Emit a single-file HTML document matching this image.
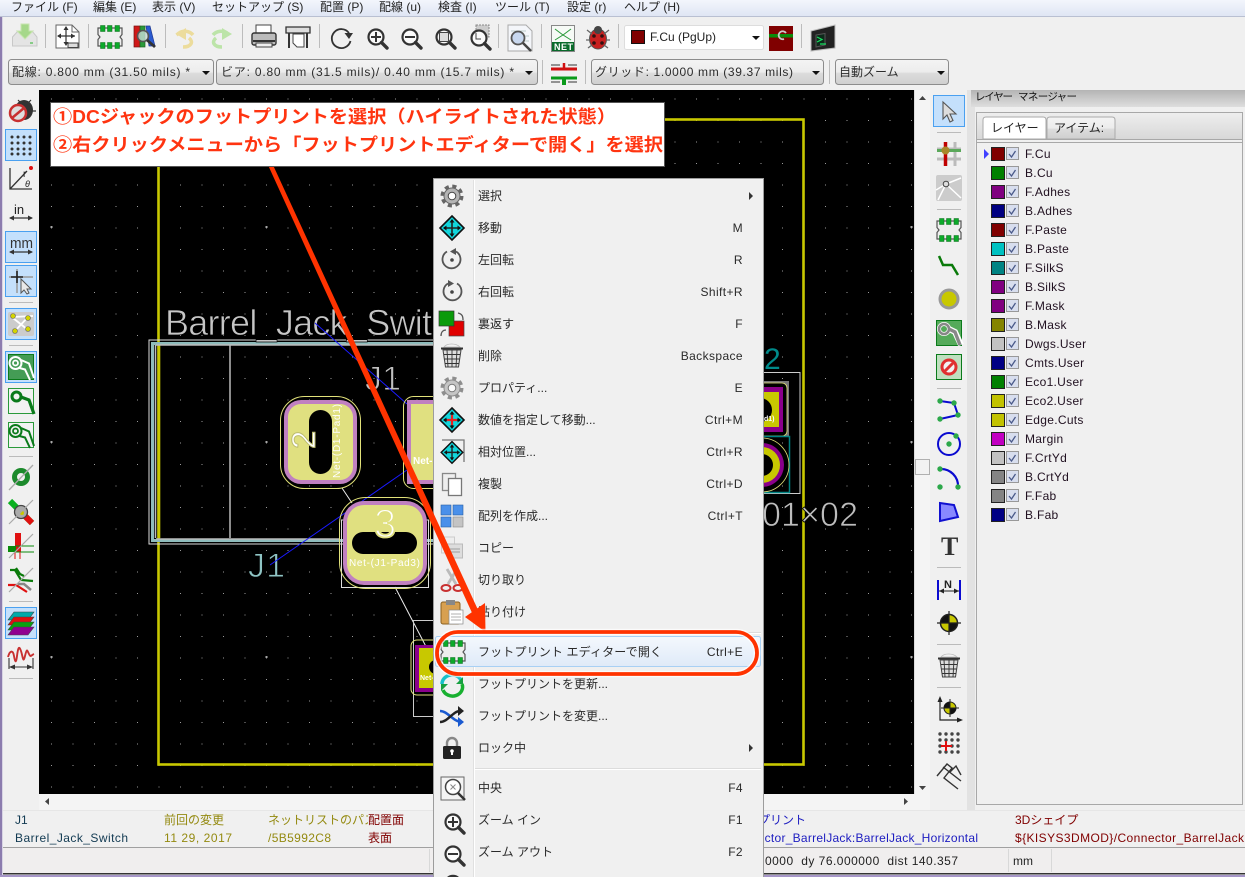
<!DOCTYPE html>
<html lang="ja"><head><meta charset="utf-8"><title>KiCad Pcbnew</title>
<style>
html,body{margin:0;padding:0;background:#f0f0f0;width:1245px;height:877px;overflow:hidden}
svg{position:absolute;left:0;top:0;display:block}
text{font-family:"Liberation Sans","Noto Sans CJK JP",sans-serif;font-size:12px;fill:#222;white-space:pre}
.m text{font-size:12px;fill:#2a2a2a}
.m .s{text-anchor:end;letter-spacing:.4px}
.l text{letter-spacing:.3px;fill:#201020}
.a text{font-size:18px;font-weight:bold;fill:#ff3410}
.c text{font-size:12px;fill:#2c2c2c}
</style></head><body>
<svg width="1245" height="877" viewBox="0 0 1245 877" xmlns="http://www.w3.org/2000/svg">
<defs>
<linearGradient id="mb" x1="0" y1="0" x2="0" y2="1"><stop offset="0" stop-color="#f3f6fc"/><stop offset="1" stop-color="#dfe6f4"/></linearGradient>
<linearGradient id="cb" x1="0" y1="0" x2="0" y2="1"><stop offset="0" stop-color="#f4f4f4"/><stop offset=".5" stop-color="#ececec"/><stop offset=".55" stop-color="#dcdcdc"/><stop offset="1" stop-color="#cfcfcf"/></linearGradient>
<linearGradient id="hd" x1="0" y1="0" x2="0" y2="1"><stop offset="0" stop-color="#b4b4b4"/><stop offset="1" stop-color="#dedede"/></linearGradient>
<linearGradient id="hi" x1="0" y1="0" x2="0" y2="1"><stop offset="0" stop-color="#f4f8fd"/><stop offset="1" stop-color="#dfeaf8"/></linearGradient>
<linearGradient id="tb" x1="0" y1="0" x2="0" y2="1"><stop offset="0" stop-color="#eee"/><stop offset="1" stop-color="#d8d8d8"/></linearGradient>
<pattern id="dots" x="51" y="98.5" width="21.5" height="21.5" patternUnits="userSpaceOnUse"><rect width="1" height="1" fill="#9a9a9a"/></pattern>
<pattern id="bigdots" x="50.500" y="226" width="215" height="215" patternUnits="userSpaceOnUse"><rect width="2" height="2" fill="#aaa"/></pattern>
<g id="fp"><path d="M1 4H25V10.5L23 13 25 15.5V22H1V15.5L3 13 1 10.5Z" fill="#eee" stroke="#555" stroke-width="1.2"/><g fill="#0caa2a" stroke="#0a6a1a" stroke-width=".5"><rect x="3.500" y="1.500" width="4.500" height="6"/><rect x="10.500" y="1.500" width="4.500" height="6"/><rect x="18" y="1.500" width="4.500" height="6"/><rect x="3.500" y="18.500" width="4.500" height="6"/><rect x="10.500" y="18.500" width="4.500" height="6"/><rect x="18" y="18.500" width="4.500" height="6"/></g></g>
<g id="mag"><circle cx="10" cy="10" r="7.500" fill="#fafafa" stroke="#333" stroke-width="2.200"/><path d="M15.500 15.500L21 21" stroke="#333" stroke-width="3.400" stroke-linecap="round"/></g>
<g id="gear"><circle cx="12" cy="12" r="9.500" fill="none" stroke="#666" stroke-width="4" stroke-dasharray="4 3.460"/><circle cx="12" cy="12" r="8" fill="#b4b4b4" stroke="#666"/><circle cx="12" cy="12" r="3.800" fill="#fff" stroke="#444"/></g>
<g id="mv"><path d="M12 0L24 12 12 24 0 12Z" fill="#12d6dc" stroke="#111" stroke-width="1.600"/><path d="M12 4V20M4 12H20" stroke="#222" stroke-width="1.600"/><path d="M12 3L9.500 6.500H14.500ZM12 21L9.500 17.500H14.500ZM3 12L6.500 9.500V14.500ZM21 12L17.500 9.500V14.500Z" fill="#111"/></g>
<g id="trash"><path d="M5 4C8 0 17 0 21 4Z" fill="#f4f4f4" stroke="#bbb" stroke-width=".8"/><path d="M2 5.500H24" stroke="#333" stroke-width="2"/><path d="M4 7L6.500 24H19.500L22 7Z" fill="#ddd" stroke="#444"/><path d="M8 7L9 24M13 7V24M18 7L17 24M5 11.500H21M5.500 16H20.500M6 20.500H20" stroke="#333" stroke-width=".9"/></g>
<g id="tr" fill="none"><circle cx="7.500" cy="7.500" r="4.500" stroke-width="3"/><path d="M12 8L20 11 25 25" stroke-width="3.200"/></g>
<g id="tz" fill="none"><circle cx="7.500" cy="8" r="6" stroke-width="2"/><circle cx="7.500" cy="8" r="2.500" stroke-width="1.800"/><path d="M13 5L21 8.500 26 23M11.500 13L17 14.500 22 25" stroke-width="2"/></g>
</defs>

<!-- chrome -->
<rect width="1245" height="877" fill="#f0f0f0"/>
<rect width="1245" height="16" fill="url(#mb)"/><rect y="16" width="1245" height="1" fill="#b9c0d2"/>
<rect x="0" y="17" width="2" height="860" fill="#8c7cae"/><rect x="2" y="17" width="1" height="860" fill="#d8d4e4"/>
<text x="11" y="11">ファイル (F)</text><text x="93" y="11">編集 (E)</text><text x="152" y="11">表示 (V)</text><text x="212" y="11">セットアップ (S)</text><text x="320" y="11">配置 (P)</text><text x="379" y="11">配線 (u)</text><text x="438" y="11">検査 (I)</text><text x="495" y="11">ツール (T)</text><text x="567" y="11">設定 (r)</text><text x="624" y="11">ヘルプ (H)</text>

<!-- canvas -->
<rect x="39" y="90" width="875" height="704" fill="#000"/>
<rect x="39" y="90" width="875" height="704" fill="url(#dots)"/>
<rect x="39" y="90" width="875" height="704" fill="url(#bigdots)"/>
<rect x="158.500" y="119.500" width="645" height="645" fill="none" stroke="#c8c800" stroke-width="2.600"/>
<rect x="149" y="340" width="330" height="204" fill="none" stroke="#ddd" stroke-width="1"/>
<rect x="152.500" y="343.500" width="330" height="197" fill="none" stroke="#8fbcbc" stroke-width="3"/>
<path d="M159 345V538" stroke="#c8c800" stroke-width="2.600"/>
<path d="M155.500 345V538" stroke="#bbb" stroke-width="1.500"/>
<path d="M230 345V538M156 345H440M156 539H340" stroke="#bbb" stroke-width="1.500"/>
<text x="165" y="335" textLength="267" lengthAdjust="spacing" style="font-size:36px;fill:#c6c6c6;stroke:#000;stroke-width:.7px">Barrel_Jack_Swit</text>
<text x="365" y="390" textLength="36" style="font-size:34px;fill:#c0c0c0;stroke:#000;stroke-width:.9px">J1</text>
<text x="248" y="577" textLength="37" style="font-size:34px;fill:#8fc4c4;stroke:#000;stroke-width:.9px">J1</text>
<!-- ratsnest -->
<path d="M315 323L407 404M407 470L270 565" stroke="#1a1aff" stroke-width="1" fill="none"/>
<path d="M342 488L352 503M395 587L433 660" stroke="#eee" stroke-width="1" fill="none"/>
<!-- pad 2 -->
<rect x="280.500" y="396.500" width="80" height="92" rx="24" fill="none" stroke="#e2e27a"/>
<rect x="284" y="400" width="73" height="84" rx="17" fill="#c080c0"/>
<rect x="288" y="404" width="65" height="76" rx="13" fill="#e0e080"/>
<rect x="309" y="410" width="23" height="64" rx="11.500" fill="#000"/>
<text transform="translate(315,449) rotate(-90)" style="font-size:33px;fill:#fff;stroke:#bdbd70;stroke-width:1px">2</text>
<text transform="translate(340,478) rotate(-90)" textLength="74" style="font-size:10px;fill:#fff">Net-(D1-Pad1)</text>
<!-- pad 1 -->
<rect x="403.500" y="396.500" width="60" height="92" rx="10" fill="none" stroke="#e2e27a"/>
<rect x="407" y="400" width="50" height="84" fill="#c080c0"/>
<rect x="411" y="404" width="40" height="76" fill="#e0e080"/>
<text x="413" y="464" style="font-size:10px;fill:#fff;font-weight:bold">Net-</text>
<!-- pad 3 -->
<rect x="341.500" y="520" width="87" height="67.500" fill="none" stroke="#ddd"/>
<rect x="339.500" y="497.500" width="91" height="91" rx="26" fill="none" stroke="#e2e27a"/>
<rect x="343" y="501" width="84" height="84" rx="21" fill="#c080c0"/>
<rect x="347" y="505" width="76" height="76" rx="17" fill="#e0e080"/>
<rect x="352" y="532" width="65" height="22" rx="11" fill="#000"/>
<text x="374" y="537" style="font-size:40px;fill:#fff;stroke:#e0e080;stroke-width:1.800px">3</text>
<text x="349" y="566" textLength="71" style="font-size:10px;fill:#fff">Net-(J1-Pad3)</text>
<!-- bottom fp -->
<rect x="413.500" y="620.500" width="40" height="96" fill="none" stroke="#ccc"/>
<rect x="411" y="640" width="30" height="55" rx="6" fill="none" stroke="#e2e27a"/>
<rect x="415" y="645" width="30" height="47" fill="#8a008a"/>
<rect x="419" y="648" width="30" height="40" fill="#c8c800"/>
<circle cx="436" cy="667" r="7" fill="#000"/>
<text x="420" y="680" style="font-size:7px;fill:#fff;font-weight:bold">Net-</text>
<!-- right pads -->
<rect x="740" y="372.500" width="60" height="121" fill="none" stroke="#ccc"/>
<rect x="750" y="381" width="39" height="56" fill="#777"/>
<rect x="750" y="383" width="37" height="53" rx="5" fill="#000" stroke="#e2e27a" stroke-width=".8"/>
<rect x="750" y="387" width="33" height="45" fill="#8a008a"/>
<rect x="750" y="392" width="29" height="35" fill="#c8c800"/>
<circle cx="760" cy="410" r="12" fill="#000"/>
<text x="764" y="421" style="font-size:7px;fill:#fff;font-weight:bold">d1)</text>
<rect x="740" y="436.500" width="49.500" height="56" fill="none" stroke="#008484" stroke-width="1.500"/>
<circle cx="762" cy="465" r="27" fill="none" stroke="#e2e27a" stroke-width=".8"/>
<circle cx="762" cy="465" r="22" fill="#8a008a"/>
<circle cx="762" cy="465" r="18" fill="#c8c800"/>
<circle cx="762" cy="465" r="11" fill="#000"/>
<text x="764" y="369" style="font-size:30px;fill:#008a8a">2</text>
<text x="762" y="526" textLength="96" lengthAdjust="spacing" style="font-size:34px;fill:#bdbdbd;stroke:#000;stroke-width:.8px">01×02</text>

<!-- top toolbar -->
<g fill="none">
<path d="M12.500 37L18 31H32L37 37V46H12.500Z" fill="#e4e4e4" stroke="#c8c8c8"/><path d="M21 24H29V31H33L25 39 17 31H21Z" fill="#a6d88a" stroke="#c8e4b0"/><rect x="30" y="42" width="3" height="2" fill="#8c8"/>
<path d="M45.500 24V48M88.500 24V48M165.500 24V48M242.500 24V48M319.500 24V48M498.500 24V48M541.500 24V48M618.500 24V48M801.500 24V48" stroke="#bcbcbc"/>
<path d="M56 25H72L79 32V48H56Z" fill="#fff" stroke="#666"/><path d="M72 25V32H79" stroke="#666"/><path d="M66 27V44M58 36H75" stroke="#333" stroke-width="1.200"/><path d="M66 26L63.500 30H68.500ZM66 46L63.500 42H68.500ZM57 36L61 33.500V38.500ZM75 36L71 33.500V38.500Z" fill="#333"/><rect x="68" y="43" width="10" height="4.500" fill="#ddd" stroke="#444"/>
<use href="#fp" x="97" y="24"/>
<rect x="134" y="26" width="6" height="21" fill="#d01818" stroke="#701010" stroke-width=".7"/><rect x="140" y="26" width="5" height="21" fill="#2a9a3a" stroke="#206020" stroke-width=".7"/><path d="M146 26H150L155 46H149Z" fill="#2a5ad0" stroke="#203a90" stroke-width=".7"/><circle cx="143" cy="36" r="5.500" fill="#c8dcd8" fill-opacity=".8" stroke="#555" stroke-width="1.600"/><path d="M147 40L155 47" stroke="#333" stroke-width="2.800"/>
<path d="M193 35A10 9 0 0 0 179 33M179 33L176.500 35M183 47C191 47 194 42 189 38" stroke="#ecdc9c" stroke-width="3.500"/><path d="M176 34L186 28V40Z" fill="#ecdc9c" stroke="none"/>
<path d="M213 35A10 9 0 0 1 227 33M222 47C214 47 211 42 216 38" stroke="#bce4a8" stroke-width="3.500"/><path d="M232 34L222 28V40Z" fill="#bce4a8" stroke="none"/>
<rect x="256" y="25" width="15" height="8" fill="#fff" stroke="#444"/><rect x="252" y="33" width="24" height="12" rx="2" fill="#bbb" stroke="#333" stroke-width="1.400"/><rect x="253" y="40" width="22" height="2" fill="#333"/><rect x="256" y="43" width="16" height="4" fill="#eee" stroke="#444"/>
<path d="M286 27H310V33H286Z" fill="#ddd" stroke="#333" stroke-width="1.300"/><path d="M289 33V48M307 33V48" stroke="#333" stroke-width="2"/><path d="M293 34H304V47H297L293 43Z" fill="#fff" stroke="#444"/>
<path d="M349 33A9.500 9.500 0 1 0 350.500 41" stroke="#333" stroke-width="1.800"/><path d="M344.500 33H353L349 39Z" fill="#333"/>
<use href="#mag" x="366" y="27"/><path d="M371 37H381M376 32V42" stroke="#333" stroke-width="2"/>
<use href="#mag" x="400" y="27"/><path d="M405 37H415" stroke="#333" stroke-width="2"/>
<use href="#mag" x="434" y="27"/><rect x="439.500" y="32.500" width="9" height="9" fill="#ddd" stroke="#444"/>
<rect x="476" y="25" width="13" height="12" fill="#ccc" stroke="#888" stroke-dasharray="2 1"/><use href="#mag" x="469" y="28"/><path d="M476 33V39H481" stroke="#444"/>
<path d="M508 25H526L532 31V51H508Z" fill="#f4f6fa" stroke="#aaa"/><path d="M511 31H526M511 36H529M511 41H529" stroke="#bcc"/><circle cx="518" cy="38" r="6.500" fill="#c8d8f0" stroke="#555" stroke-width="1.800"/><path d="M523 43L531 51" stroke="#444" stroke-width="2.500"/>
<rect x="551.500" y="25.500" width="23" height="26" fill="#f6faf6" stroke="#888"/><path d="M555 29L563 35 571 29M555 40L563 35 571 40" stroke="#2a9a3a" stroke-width="1"/><rect x="552" y="42" width="22" height="9" fill="#086a2a"/>
<ellipse cx="598" cy="39" rx="8.500" ry="10" fill="#c82020" stroke="#555"/><circle cx="598" cy="30" r="4" fill="#444"/><path d="M587 30L592 34M609 30L604 34M586 40H590M610 40H606M588 48L592 45M608 48L604 45" stroke="#666" stroke-width="1.300"/><g fill="#301010"><circle cx="594" cy="36" r="1.800"/><circle cx="602" cy="36" r="1.800"/><circle cx="594" cy="43" r="1.800"/><circle cx="602" cy="43" r="1.800"/></g>
<rect x="769" y="26" width="24" height="25" fill="#800000"/><rect x="769" y="34" width="24" height="3.500" fill="#0a8a0a"/><path d="M786 33A4 4 0 1 0 784 39" stroke="#ccc" stroke-width="1.800"/>
<path d="M811 31L835 25V48L811 51Z" fill="#222" stroke="#bbb"/><path d="M816 35L825 33.500V45L816 47Z" fill="#0e2a1a" stroke="#555"/><path d="M817 37L822 39.500 817 42M820 44H826" stroke="#18e060" stroke-width="1.200"/>
</g>
<text x="554" y="50" textLength="19" style="font-size:9px;font-weight:bold;fill:#fff">NET</text>
<g>
<rect x="624.500" y="25.500" width="139" height="24" rx="2" fill="#fff" stroke="#ddd"/><rect x="631.500" y="30.500" width="13" height="13" fill="#800000" stroke="#111"/><text x="650" y="41">F.Cu (PgUp)</text><path d="M752 36H760L756 40Z" fill="#111"/>
</g>
<!-- combos -->
<g class="c">
<rect x="8.500" y="59.500" width="205" height="25" rx="3" fill="url(#cb)" stroke="#8c8c8c"/><text x="12" y="76" textLength="178">配線: 0.800 mm (31.50 mils) *</text><path d="M202 71H210L206 75Z" fill="#111"/>
<rect x="216.500" y="59.500" width="321" height="25" rx="3" fill="url(#cb)" stroke="#8c8c8c"/><text x="221" y="76" textLength="293">ビア: 0.80 mm (31.5 mils)/ 0.40 mm (15.7 mils) *</text><path d="M525 71H533L529 75Z" fill="#111"/>
<rect x="591.500" y="59.500" width="232" height="25" rx="3" fill="url(#cb)" stroke="#8c8c8c"/><text x="595" y="76" textLength="198">グリッド: 1.0000 mm (39.37 mils)</text><path d="M812 71H820L816 75Z" fill="#111"/>
<rect x="835.500" y="59.500" width="113" height="25" rx="3" fill="url(#cb)" stroke="#8c8c8c"/><text x="839" y="76">自動ズーム</text><path d="M937 71H945L941 75Z" fill="#111"/>
</g>
<path d="M542.500 60V84M585.500 60V84M829.500 60V84" stroke="#bcbcbc"/>
<g fill="none"><path d="M551 69H577" stroke="#d01010" stroke-width="3"/><path d="M551 78H577" stroke="#0a9a1a" stroke-width="3"/><path d="M564 63V69L560 69" stroke="#d01010" stroke-width="2.500"/><path d="M564 78V85" stroke="#0a9a1a" stroke-width="4"/><path d="M551 65H560M568 65H577M551 82H560M568 82H577" stroke="#333"/></g>

<!-- left toolbar -->
<g fill="none">
<ellipse cx="24" cy="110" rx="9" ry="10" fill="#333"/><path d="M18 100L22 104M31 100L27 104M13 111H36" stroke="#333" stroke-width="1.200"/><circle cx="18" cy="113" r="8" fill="#ddd" stroke="#c83030" stroke-width="2.500"/><path d="M12 118L24 108" stroke="#c83030" stroke-width="2.500"/>
<rect x="5.500" y="129.500" width="31" height="31" fill="#c4e0fc" stroke="#4aa0f0"/>
<g fill="#333"><circle cx="12" cy="137" r="1.500"/><circle cx="18" cy="137" r="1.500"/><circle cx="24" cy="137" r="1.500"/><circle cx="30" cy="137" r="1.500"/><circle cx="12" cy="143" r="1.500"/><circle cx="18" cy="143" r="1.500"/><circle cx="24" cy="143" r="1.500"/><circle cx="30" cy="143" r="1.500"/><circle cx="12" cy="149" r="1.500"/><circle cx="18" cy="149" r="1.500"/><circle cx="24" cy="149" r="1.500"/><circle cx="30" cy="149" r="1.500"/><circle cx="12" cy="154" r="1.500"/><circle cx="18" cy="154" r="1.500"/><circle cx="24" cy="154" r="1.500"/><circle cx="30" cy="154" r="1.500"/></g>
<path d="M10 168V189H32M10 189L27 171" stroke="#333" stroke-width="1.300"/><circle cx="31" cy="168" r="2" fill="#e01010"/>
<path d="M10 218H32" stroke="#333" stroke-width="1.200"/><path d="M9 218L14 215.500V220.500ZM33 218L28 215.500V220.500Z" fill="#333"/>
<rect x="5.500" y="231.500" width="31" height="31" fill="#c4e0fc" stroke="#4aa0f0"/>
<path d="M10 252H32" stroke="#333" stroke-width="1.200"/><path d="M9 252L14 249.500V254.500ZM33 252L28 249.500V254.500Z" fill="#333"/>
<rect x="5.500" y="265.500" width="31" height="31" fill="#c4e0fc" stroke="#4aa0f0"/>
<path d="M9 277H33M17 269V293" stroke="#999" stroke-width="1.500"/><path d="M11 277H23M17 271V283" stroke="#222" stroke-width="1.600"/><path d="M21 279V293L24 290 27 294 29 293 27 289H31Z" fill="#e8e8e8" stroke="#555"/>
<path d="M9 302.500H33M9 345.500H33M9 456.500H33M9 601.500H33M9 678.500H33" stroke="#bbb"/>
<rect x="5.500" y="308.500" width="31" height="31" fill="#c4e0fc" stroke="#4aa0f0"/><rect x="8" y="312" width="26" height="24" rx="2" fill="#ccc"/><path d="M13 317L33 316M15 331L28 317M13 318L28 330" stroke="#fff" stroke-width="1.800"/><g fill="#d4d400" stroke="#666" stroke-width=".6"><circle cx="13" cy="316" r="2.500"/><circle cx="28" cy="318" r="2.500"/><circle cx="15" cy="331" r="2.500"/><circle cx="28" cy="329" r="2.500"/></g>
<rect x="5.500" y="351.500" width="31" height="31" fill="#c4e0fc" stroke="#4aa0f0"/><rect x="8.500" y="354.500" width="25" height="25" fill="#449c55" stroke="#0a7a1a"/><use href="#tz" x="8" y="355" stroke="#fff"/>
<rect x="8.500" y="388.500" width="25" height="25" fill="#f2f2f2" stroke="#2a9a3a"/><use href="#tr" x="9" y="389" stroke="#0a7a1a"/>
<rect x="8.500" y="422.500" width="25" height="25" fill="#f2f2f2" stroke="#2a9a3a"/><use href="#tz" x="8" y="423" stroke="#0a7a1a"/>
<circle cx="21" cy="477" r="9" fill="#1c8a2c"/><circle cx="21" cy="477" r="4.500" fill="#f0f0f0" stroke="#1c8a2c"/><path d="M9 490L33 465" stroke="#aaa" stroke-width="1.300"/>
<path d="M10 501L32 523" stroke="#0ab020" stroke-width="6" /><path d="M23 514L32 523" stroke="#e01010" stroke-width="6"/><circle cx="21" cy="512" r="6.500" fill="#aaa" stroke="#444" stroke-width="1.300"/><circle cx="22" cy="513" r="2" fill="#c8c800"/><path d="M9 524L33 500" stroke="#aaa" stroke-width="1.200"/>
<rect x="15" y="533" width="6" height="19" fill="#e01010"/><rect x="8" y="546" width="8" height="6" fill="#0a8a0a"/><path d="M15 546H34M15 552H34" stroke="#0a8a0a"/><path d="M15 552V559M20 552V559" stroke="#e01010"/><path d="M9 558L33 534" stroke="#aaa" stroke-width="1.200"/>
<path d="M10 570L15 570 21 580 33 581M16 568L20 574 24 576" stroke="#0a7a0a" stroke-width="2.200"/><path d="M8 585H16L27 592" stroke="#e01010" stroke-width="2.200" /><path d="M18 584H24L31 590" stroke="#888" stroke-width="2.500"/><path d="M9 592L33 568" stroke="#aaa" stroke-width="1.200"/>
<rect x="5.500" y="607.500" width="31" height="31" fill="#c4e0fc" stroke="#4aa0f0"/>
<path d="M14 612H34L28 620H8Z" fill="#0aa" stroke="#444" stroke-width=".6"/><path d="M14 617H34L28 625H8Z" fill="#e01010" stroke="#444" stroke-width=".6"/><path d="M14 622H34L28 630H8Z" fill="#0aa010" stroke="#444" stroke-width=".6"/><path d="M14 627H34L28 635H8Z" fill="#900090" stroke="#444" stroke-width=".6"/>
<path d="M8 657C10 650 13 650 14 656S16 664 17 656 19 645 21 651 23 664 25 656 27 650 29 654 31 655 34 654" stroke="#c83030" stroke-width="1.900"/><path d="M9 658V669M33 658V669M10 667H32" stroke="#333" stroke-width="1.100"/><path d="M9 667L15 664.500V669.500ZM33 667L27 664.500V669.500Z" fill="#333"/>
</g>
<text x="14" y="214" style="font-size:13px">in</text>
<text x="10" y="248" textLength="23" lengthAdjust="spacingAndGlyphs" style="font-size:15px;fill:#333">mm</text>
<text x="23" y="177" style="font-size:10px">r</text><text x="25" y="187" style="font-size:9px;font-style:italic">θ</text>

<!-- right scrollbar + toolbar -->
<rect x="914" y="90" width="16" height="720" fill="#f4f4f4"/><rect x="914" y="90" width="1" height="704" fill="#ddd"/>
<path d="M919 100H926L922.500 96Z" fill="#444"/><path d="M919 786H926L922.500 790Z" fill="#444"/>
<rect x="915.500" y="459.500" width="14" height="15" fill="#f2f2f2" stroke="#b0b0b0"/>
<rect x="39" y="794" width="875" height="16" fill="#f4f4f4"/><path d="M49 798V805L45 801.500Z" fill="#444"/><path d="M904 798V805L908 801.500Z" fill="#444"/>
<rect x="967" y="90" width="8" height="720" fill="#e2e2e2"/>
<g fill="none">
<rect x="933.500" y="95.500" width="31" height="31" fill="#c4e0fc" stroke="#4aa0f0"/><path d="M943 102V119L947 115 950 122 953 120.500 950 114H956Z" fill="#ddd" stroke="#555" stroke-width="1.100"/>
<path d="M937 132.500H961M937 209.500H961M937 388.500H961M937 567.500H961M937 644.500H961M937 687.500H961" stroke="#bbb"/>
<path d="M937 149H961M937 159H961M955 142V166" stroke="#bbb" stroke-width="3"/><path d="M937 150.500H961" stroke="#5aa85a" stroke-width="3"/><path d="M945.500 142V166" stroke="#c00000" stroke-width="3.500"/><circle cx="945.500" cy="150.500" r="4" fill="#a8882a"/>
<rect x="936" y="175" width="26" height="26" rx="2" fill="#ccc"/><path d="M946 184L936 190M946 184L961 178M946 184L938 200M946 184L961 198" stroke="#fff" stroke-width="1.500"/><circle cx="946" cy="184" r="2.800" fill="#ddd" stroke="#444"/>
<use href="#fp" x="936" y="217"/>
<path d="M939 256L943 265H952L958 275" stroke="#0a7a0a" stroke-width="2.500"/>
<circle cx="949" cy="299" r="9" fill="#c8c800" stroke="#999" stroke-width="3"/>
<rect x="936.500" y="320.500" width="25" height="25" fill="#55aa5a" stroke="#0a7a1a"/>
<circle cx="944" cy="329" r="5" stroke="#fff" stroke-width="4"/><path d="M949 329L955 332 961 345" stroke="#fff" stroke-width="6"/><circle cx="944" cy="329" r="5" stroke="#888" stroke-width="2.600"/><path d="M949 329L955 332 960 345" stroke="#888" stroke-width="3.400"/>
<rect x="936.500" y="354.500" width="25" height="25" fill="#bfe0bf" stroke="#0a7a1a"/><circle cx="949" cy="367" r="7" fill="#f2f2f2" stroke="#e03030" stroke-width="3"/><path d="M945 371L953 363" stroke="#e03030" stroke-width="3"/>
<path d="M940 401L954 403 958 415 940 419" stroke="#0a0ad0" stroke-width="2"/><g fill="#2ca84a"><circle cx="940" cy="401" r="2.700"/><circle cx="954" cy="403" r="2.700"/><circle cx="958" cy="415" r="2.700"/><circle cx="940" cy="419" r="2.700"/></g>
<circle cx="949" cy="444" r="11" stroke="#0a0ad0" stroke-width="2"/><circle cx="949" cy="444" r="2.700" fill="#2ca84a"/><circle cx="956" cy="436" r="2.700" fill="#2ca84a"/>
<path d="M940 469A17 17 0 0 1 958 487" stroke="#0a0ad0" stroke-width="2.200"/><circle cx="940" cy="487" r="2.700" fill="#2ca84a"/><circle cx="958" cy="487" r="2.700" fill="#2ca84a"/><circle cx="940" cy="469" r="2.700" fill="#2ca84a"/>
<path d="M940 503L954 505 958 517 940 521Z" fill="#8888ff" stroke="#1010d0" stroke-width="2"/>
<path d="M938 580V600M960 580V600" stroke="#0a0ad0" stroke-width="2"/><path d="M939 591H959" stroke="#222"/><path d="M939 591L944 588.500V593.500ZM959 591L954 588.500V593.500Z" fill="#222"/>
<circle cx="949" cy="623" r="8.500" fill="#c8c800" stroke="#222" stroke-width="1.500"/><path d="M949 623H941A8 8 0 0 1 949 615ZM949 623H957A8 8 0 0 1 949 631Z" fill="#111"/><path d="M937 623H961M949 611V635" stroke="#222" stroke-width="1.200"/>
<use href="#trash" x="936" y="653"/>
<path d="M940 698V720H961" stroke="#222" stroke-width="1.200"/><path d="M940 696L937.500 702H942.500ZM963 720L957 717.500V722.500Z" fill="#222"/><circle cx="950" cy="708" r="6" fill="#c8c800" stroke="#222"/><path d="M950 708H944A6 6 0 0 1 950 702ZM950 708H956A6 6 0 0 1 950 714Z" fill="#111"/><path d="M941 708H959M950 699V717" stroke="#222"/>
<g fill="#444"><circle cx="940" cy="734" r="1.700"/><circle cx="946" cy="734" r="1.700"/><circle cx="952" cy="734" r="1.700"/><circle cx="958" cy="734" r="1.700"/><circle cx="940" cy="740" r="1.700"/><circle cx="946" cy="740" r="1.700"/><circle cx="952" cy="740" r="1.700"/><circle cx="958" cy="740" r="1.700"/><circle cx="940" cy="746" r="1.700"/><circle cx="952" cy="746" r="1.700"/><circle cx="958" cy="746" r="1.700"/><circle cx="940" cy="752" r="1.700"/><circle cx="946" cy="752" r="1.700"/><circle cx="952" cy="752" r="1.700"/><circle cx="958" cy="752" r="1.700"/></g><path d="M941 746H952M946 741V751" stroke="#e01010" stroke-width="2"/>
<path d="M937 776L947 764 952 768 944 778 958 789M943 767L961 781M950 772L956 766 961 775" stroke="#333" stroke-width="1.400"/>
</g>
<text x="941" y="555" style="font-size:26px;font-weight:bold;font-family:'Liberation Serif',serif;fill:#333">T</text>
<text x="944" y="588" style="font-size:11px;font-weight:bold">N</text>

<!-- layer manager -->
<rect x="971" y="90" width="274" height="17" fill="url(#hd)"/>
<text x="975" y="100" textLength="38" style="font-size:10.500px;fill:#111">レイヤー</text><text x="1018" y="100" textLength="59" style="font-size:10.500px;fill:#111">マネージャー</text>
<rect x="976.500" y="112.500" width="266" height="692" fill="#f0f0f0" stroke="#a8a8a8"/>
<rect x="977" y="113" width="265" height="26" fill="url(#tb)"/>
<path d="M983 139V120Q983 117 986 117H1043Q1046 117 1046 120V139Z" fill="#fff" stroke="#aaa"/>
<path d="M1047 139V120Q1047 117 1050 117H1112Q1115 117 1115 120V139Z" fill="url(#cb)" stroke="#aaa"/>
<path d="M977 139.500H1242M977 142.500H1242" stroke="#a8a8a8"/>
<text x="991" y="132">レイヤー</text><text x="1054" y="132">アイテム:</text>
<path d="M984 149V159L989 154Z" fill="#4040ff"/>
<g class="l">
<g stroke="#222"><rect x="991.500" y="147.500" width="13" height="13" fill="#800000"/><rect x="991.500" y="166.500" width="13" height="13" fill="#008000"/><rect x="991.500" y="185.500" width="13" height="13" fill="#800080"/><rect x="991.500" y="204.500" width="13" height="13" fill="#000080"/><rect x="991.500" y="223.500" width="13" height="13" fill="#800000"/><rect x="991.500" y="242.500" width="13" height="13" fill="#00c2c2"/><rect x="991.500" y="261.500" width="13" height="13" fill="#008484"/><rect x="991.500" y="280.500" width="13" height="13" fill="#800080"/><rect x="991.500" y="299.500" width="13" height="13" fill="#800080"/><rect x="991.500" y="318.500" width="13" height="13" fill="#848400"/><rect x="991.500" y="337.500" width="13" height="13" fill="#c2c2c2"/><rect x="991.500" y="356.500" width="13" height="13" fill="#000084"/><rect x="991.500" y="375.500" width="13" height="13" fill="#008000"/><rect x="991.500" y="394.500" width="13" height="13" fill="#c2c200"/><rect x="991.500" y="413.500" width="13" height="13" fill="#c2c200"/><rect x="991.500" y="432.500" width="13" height="13" fill="#c200c2"/><rect x="991.500" y="451.500" width="13" height="13" fill="#c2c2c2"/><rect x="991.500" y="470.500" width="13" height="13" fill="#848484"/><rect x="991.500" y="489.500" width="13" height="13" fill="#848484"/><rect x="991.500" y="508.500" width="13" height="13" fill="#000084"/></g>
<g fill="#d8deee" stroke="#999"><rect x="1006.500" y="147.500" width="12" height="12"/><rect x="1006.500" y="166.500" width="12" height="12"/><rect x="1006.500" y="185.500" width="12" height="12"/><rect x="1006.500" y="204.500" width="12" height="12"/><rect x="1006.500" y="223.500" width="12" height="12"/><rect x="1006.500" y="242.500" width="12" height="12"/><rect x="1006.500" y="261.500" width="12" height="12"/><rect x="1006.500" y="280.500" width="12" height="12"/><rect x="1006.500" y="299.500" width="12" height="12"/><rect x="1006.500" y="318.500" width="12" height="12"/><rect x="1006.500" y="337.500" width="12" height="12"/><rect x="1006.500" y="356.500" width="12" height="12"/><rect x="1006.500" y="375.500" width="12" height="12"/><rect x="1006.500" y="394.500" width="12" height="12"/><rect x="1006.500" y="413.500" width="12" height="12"/><rect x="1006.500" y="432.500" width="12" height="12"/><rect x="1006.500" y="451.500" width="12" height="12"/><rect x="1006.500" y="470.500" width="12" height="12"/><rect x="1006.500" y="489.500" width="12" height="12"/><rect x="1006.500" y="508.500" width="12" height="12"/></g>
<path d="M1009 154l2.500 3 4-6m-6.500 22l2.500 3 4-6m-6.500 22l2.500 3 4-6m-6.500 22l2.500 3 4-6m-6.500 22l2.500 3 4-6m-6.500 22l2.500 3 4-6m-6.500 22l2.500 3 4-6m-6.500 22l2.500 3 4-6m-6.500 22l2.500 3 4-6m-6.500 22l2.500 3 4-6m-6.500 22l2.500 3 4-6m-6.500 22l2.500 3 4-6m-6.500 22l2.500 3 4-6m-6.500 22l2.500 3 4-6m-6.500 22l2.500 3 4-6m-6.500 22l2.500 3 4-6m-6.500 22l2.500 3 4-6m-6.500 22l2.500 3 4-6m-6.500 22l2.500 3 4-6m-6.500 22l2.500 3 4-6" fill="none" stroke="#4a5a8a" stroke-width="1.300"/>
<text x="1025" y="158">F.Cu</text><text x="1025" y="177">B.Cu</text><text x="1025" y="196">F.Adhes</text><text x="1025" y="215">B.Adhes</text><text x="1025" y="234">F.Paste</text><text x="1025" y="253">B.Paste</text><text x="1025" y="272">F.SilkS</text><text x="1025" y="291">B.SilkS</text><text x="1025" y="310">F.Mask</text><text x="1025" y="329">B.Mask</text><text x="1025" y="348">Dwgs.User</text><text x="1025" y="367">Cmts.User</text><text x="1025" y="386">Eco1.User</text><text x="1025" y="405">Eco2.User</text><text x="1025" y="424">Edge.Cuts</text><text x="1025" y="443">Margin</text><text x="1025" y="462">F.CrtYd</text><text x="1025" y="481">B.CrtYd</text><text x="1025" y="500">F.Fab</text><text x="1025" y="519">B.Fab</text>
</g>

<!-- message panel -->
<rect x="3" y="810" width="1242" height="37" fill="#f0f0f0"/><rect x="3" y="810" width="1242" height="1" fill="#e6e6e6"/>
<text x="15" y="824" style="fill:#123a52">J1</text><text x="15" y="842" textLength="113" style="fill:#123a52">Barrel_Jack_Switch</text>
<text x="164" y="824" style="fill:#948a10">前回の変更</text><text x="164" y="842" textLength="68" style="fill:#948a10">11 29, 2017</text>
<svg x="268" y="810" width="100" height="37"><text x="0" y="14" style="fill:#948a10">ネットリストのパス</text></svg><text x="268" y="842" textLength="63" style="fill:#948a10">/5B5992C8</text>
<text x="368" y="824" style="fill:#800000">配置面</text><text x="368" y="842" style="fill:#800000">表面</text>
<text x="722" y="824" style="fill:#1c1cc0">フットプリント</text>
<text x="728" y="842" textLength="250" style="fill:#1c1cc0">Connector_BarrelJack:BarrelJack_Horizontal</text>
<text x="1015" y="824" style="fill:#800000">3Dシェイプ</text><text x="1015" y="842" textLength="229" style="fill:#800000">${KISYS3DMOD}/Connector_BarrelJack</text>
<!-- status -->
<rect x="3" y="847" width="1242" height="1" fill="#a0a0a0"/><rect x="3" y="848" width="1242" height="25" fill="#f0eeee"/>
<rect x="3" y="873" width="1242" height="1.500" fill="#333"/><rect x="0" y="875" width="1245" height="2" fill="#a696c8"/>
<path d="M429.500 849V872M1008.500 849V872M1051.500 849V872" stroke="#d8d8d8"/>
<text x="765" y="865" textLength="193">0000  dy 76.000000  dist 140.357</text><text x="1013" y="865">mm</text>

<!-- context menu -->
<rect x="433.500" y="178.500" width="330" height="705" fill="#f0f0f0" stroke="#9c9c9c"/>
<path d="M473.500 180V877" stroke="#e0e0e0"/><path d="M474.500 180V877" stroke="#fff"/>
<path d="M475 632.500H761M475 768.500H761" stroke="#dcdcdc"/><path d="M475 633.500H761M475 769.500H761" stroke="#fff"/>
<rect x="435.500" y="636.500" width="325" height="30" rx="2" fill="url(#hi)" stroke="#a8d0f4"/>
<g class="m">
<text x="478" y="200">選択</text>
<text x="478" y="232">移動</text><text x="743" y="232" class="s">M</text>
<text x="478" y="264">左回転</text><text x="743" y="264" class="s">R</text>
<text x="478" y="296">右回転</text><text x="743" y="296" class="s">Shift+R</text>
<text x="478" y="328">裏返す</text><text x="743" y="328" class="s">F</text>
<text x="478" y="360">削除</text><text x="743" y="360" class="s">Backspace</text>
<text x="478" y="392">プロパティ...</text><text x="743" y="392" class="s">E</text>
<text x="478" y="424">数値を指定して移動...</text><text x="743" y="424" class="s">Ctrl+M</text>
<text x="478" y="456">相対位置...</text><text x="743" y="456" class="s">Ctrl+R</text>
<text x="478" y="488">複製</text><text x="743" y="488" class="s">Ctrl+D</text>
<text x="478" y="520">配列を作成...</text><text x="743" y="520" class="s">Ctrl+T</text>
<text x="478" y="552">コピー</text>
<text x="478" y="584">切り取り</text>
<text x="478" y="616">貼り付け</text>
<text x="478" y="656" textLength="184">フットプリント エディターで開く</text><text x="743" y="656" class="s">Ctrl+E</text>
<text x="478" y="688">フットプリントを更新...</text>
<text x="478" y="720">フットプリントを変更...</text>
<text x="478" y="752">ロック中</text>
<text x="478" y="792">中央</text><text x="743" y="792" class="s">F4</text>
<text x="478" y="824">ズーム イン</text><text x="743" y="824" class="s">F1</text>
<text x="478" y="856">ズーム アウト</text><text x="743" y="856" class="s">F2</text>
</g>
<path d="M749 192V200L753 196ZM749 744V752L753 748Z" fill="#333"/>
<g fill="none">
<use href="#gear" x="440" y="184"/>
<use href="#mv" x="440" y="216"/>
<path d="M447 251.500A9 9 0 1 0 456 251.500" stroke="#555" stroke-width="1.800"/><path d="M456 248V255L450 251.500Z" fill="#555"/><circle cx="452" cy="260" r="1.800" fill="#444"/>
<path d="M457 283.500A9 9 0 1 1 448 283.500" stroke="#555" stroke-width="1.800"/><path d="M448 280V287L454 283.500Z" fill="#555"/><circle cx="452" cy="292" r="1.800" fill="#444"/>
<rect x="449" y="321" width="15" height="15" fill="#e00000" stroke="#444" stroke-width=".7"/><rect x="439" y="311" width="15" height="15" fill="#0a9a0a" stroke="#333" stroke-width=".7"/><path d="M458 313C462 314 463 316 463 320M441 336C441 332 443 330 446 330" stroke="#555" stroke-width="1.300"/>
<use href="#trash" x="439" y="343"/>
<use href="#gear" x="440" y="376" opacity=".7"/>
<use href="#mv" x="440" y="408"/><path d="M447 420H457M452 415V425" stroke="#e82020" stroke-width="2.200"/>
<path d="M442 440H464V462" stroke="#777" stroke-width="1.300"/><use href="#mv" x="442" y="442" transform="translate(43.400 43.800) scale(.9)"/>
<rect x="442.500" y="473.500" width="13" height="17" fill="#eee" stroke="#888" stroke-width="1.300"/><rect x="448.500" y="478.500" width="13" height="17" fill="#fff" stroke="#777" stroke-width="1.300"/>
<rect x="441" y="505" width="10" height="10" fill="#4a90ea" stroke="#2a60a0" stroke-width=".6"/><rect x="453" y="505" width="10" height="10" fill="#4a90ea" stroke="#2a60a0" stroke-width=".6"/><rect x="441" y="517" width="10" height="10" fill="#4a90ea" stroke="#2a60a0" stroke-width=".6"/><rect x="453" y="517" width="10" height="10" fill="#c4c4c4" stroke="#888" stroke-width=".6"/>
<rect x="441.500" y="537" width="13" height="16" fill="#eee" stroke="#ccc"/><rect x="447.500" y="544" width="15" height="14" fill="#ddd" stroke="#bbb"/><path d="M450 549H460M450 552H460" stroke="#aaa" stroke-width="1.300"/>
<path d="M447 569L456 584M457 569L448 584" stroke="#bbb" stroke-width="2.800"/><ellipse cx="446" cy="588" rx="4.500" ry="3" stroke="#c83030" stroke-width="2"/><ellipse cx="458" cy="588" rx="4.500" ry="3" stroke="#c83030" stroke-width="2"/>
<rect x="441" y="602" width="19" height="22" rx="2" fill="#d8a050" stroke="#8a6020"/><rect x="446" y="600" width="9" height="5" fill="#888"/><rect x="449" y="610" width="14" height="14" fill="#fff" stroke="#888" stroke-width=".7"/><path d="M451 614H461M451 617H461M451 620H461" stroke="#999" stroke-width=".8"/>
<use href="#fp" x="440" y="639"/>
<path d="M442 684A10 9 0 0 1 461 680" stroke="#18c0c8" stroke-width="3.500"/><path d="M462 684A10 9 0 0 1 443 690" stroke="#18b030" stroke-width="3.500"/><path d="M463 684H456L463 677ZM441 684H448L441 691Z" fill="#18a040"/>
<path d="M440 711C448 711 453 722 462 722" stroke="#1a5ad0" stroke-width="2.500"/><path d="M440 722C448 722 453 711 460 711" stroke="#222" stroke-width="2.500"/><path d="M458 706L464 711 458 716Z" fill="#222"/><path d="M458 717L464 722 458 727Z" fill="#1a5ad0"/>
<path d="M447 746V743A5 5 0 0 1 457 743V746" stroke="#888" stroke-width="2.400"/><rect x="443" y="746" width="18" height="13" rx="1.500" fill="#222"/><circle cx="452" cy="751" r="1.800" fill="#fff"/><rect x="451" y="751" width="2" height="4" fill="#fff"/>
<rect x="441" y="777" width="23" height="23" fill="#f4f4f4" stroke="#666"/><circle cx="453" cy="787" r="7.500" fill="#fff" stroke="#444" stroke-width="1.500"/><path d="M450.500 784.500L455.500 789.500M455.500 784.500L450.500 789.500" stroke="#888"/><path d="M458 793L465 800" stroke="#333" stroke-width="2.500"/>
<use href="#mag" x="443" y="812"/><path d="M448 822H458M453 817V827" stroke="#333" stroke-width="2"/>
<use href="#mag" x="443" y="844"/><path d="M448 854H458" stroke="#333" stroke-width="2"/>
<circle cx="453" cy="884" r="8" stroke="#333" stroke-width="2.400"/>
</g>

<!-- annotations -->
<path d="M268 165H273L479 612 473 615Z" fill="#ff3300"/>
<path d="M465 617L485 603 485.500 632Z" fill="#ff3300"/>
<rect x="437" y="632" width="320" height="42" rx="21" fill="none" stroke="#fff" stroke-width="6.500" opacity=".7"/>
<rect x="437" y="632" width="320" height="42" rx="21" fill="none" stroke="#ff3300" stroke-width="3.800"/>
<rect x="50.500" y="102.500" width="614" height="64" fill="#fff" stroke="#555"/>
<g class="a">
<text x="53" y="123" textLength="563" lengthAdjust="spacingAndGlyphs">①DCジャックのフットプリントを選択（ハイライトされた状態）</text>
<text x="53" y="151" textLength="610" lengthAdjust="spacingAndGlyphs">②右クリックメニューから「フットプリントエディターで開く」を選択</text>
</g>
</svg>
</body></html>
